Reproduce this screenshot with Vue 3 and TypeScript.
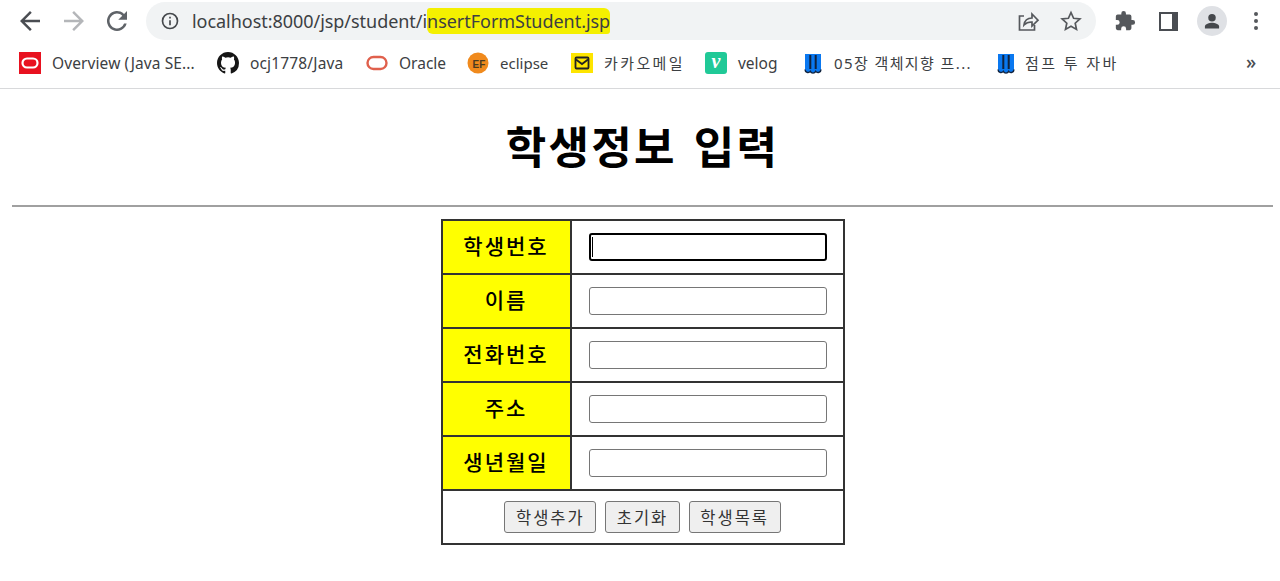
<script setup lang="ts">
const rows: string[] = ['학생번호', '이름', '전화번호', '주소', '생년월일']
</script>

<template>
  <div class="page">
    <header class="toolbar">
      <div class="nav">
        <svg class="ic back" viewBox="0 0 24 24"><path d="M20 11H7.800l5.600-5.600L12 4l-8 8 8 8 1.400-1.400L7.800 13H20z" /></svg>
        <svg class="ic fwd" viewBox="0 0 24 24"><path d="M4 11h12.200l-5.600-5.600L12 4l8 8-8 8-1.400-1.400 5.600-5.600H4z" /></svg>
        <svg class="ic reload" viewBox="0 0 24 24"><path d="M17.650 6.350A8 8 0 1 0 19.730 14h-2.080A6 6 0 1 1 12 6c1.660 0 3.140.69 4.220 1.780L13 11h7V4z" /></svg>
      </div>
      <div class="omnibox">
        <svg class="info" viewBox="0 0 24 24"><path d="M11 7h2v2h-2zm0 4h2v6h-2zm1-9a10 10 0 1 0 0 20 10 10 0 0 0 0-20zm0 18a8 8 0 1 1 0-16 8 8 0 0 1 0 16z" /></svg>
        <span class="url">localhost:8000/jsp/student/i<mark class="hl">nsertFormStudent.jsp</mark></span>
        <svg class="share" viewBox="0 0 24 24"><path class="line" d="M8 7H3.500v14h15v-5" /><path class="line" d="M8 16c.6-4.500 3.600-7 8-7V5l6 6.200-6 5.800v-4c-3.500-.2-6 1-8 3z" /></svg>
        <svg class="star" viewBox="0 0 24 24"><path class="line" d="M12 3.500l2.600 5.800 6.300.7-4.700 4.200 1.300 6.200L12 17.200l-5.500 3.200 1.300-6.200L3.100 10l6.300-.7z" /></svg>
      </div>
      <div class="actions">
        <svg class="puzzle" viewBox="0 0 24 24"><path d="M20.500 11H19V7a2 2 0 0 0-2-2h-4V3.500a2.500 2.500 0 0 0-5 0V5H4a2 2 0 0 0-2 2v3.800h1.500a2.700 2.700 0 0 1 0 5.400H2V20a2 2 0 0 0 2 2h3.800v-1.500a2.700 2.700 0 0 1 5.400 0V22H17a2 2 0 0 0 2-2v-4h1.500a2.500 2.500 0 0 0 0-5z" /></svg>
        <div class="panel"></div>
        <div class="avatar">
          <svg viewBox="0 0 24 24"><circle cx="12" cy="8" r="4.500" /><path d="M3.500 21v-2.500c0-3 5.500-4.500 8.500-4.500s8.500 1.500 8.500 4.500V21z" /></svg>
        </div>
        <div class="kebab"><i></i><i></i><i></i></div>
      </div>
    </header>

    <nav class="bookmarks">
      <a class="bm b1">
        <svg class="fav" viewBox="0 0 22 22"><rect width="22" height="22" fill="#e8111f" /><rect x="3.500" y="6.500" width="15" height="9" rx="4.500" fill="none" stroke="#fff" stroke-width="2.200" /></svg>
        <span>Overview (Java SE...</span>
      </a>
      <a class="bm b2">
        <svg class="fav" viewBox="0 0 16 16"><path fill="#161616" d="M8 0C3.580 0 0 3.580 0 8c0 3.540 2.290 6.530 5.470 7.590.4.070.55-.17.55-.38 0-.19-.01-.82-.01-1.490-2.010.37-2.530-.49-2.690-.94-.09-.23-.48-.94-.82-1.130-.28-.15-.68-.52-.01-.53.630-.01 1.080.58 1.230.82.720 1.210 1.870.870 2.330.66.070-.52.280-.87.510-1.070-1.780-.2-3.640-.89-3.640-3.950 0-.87.310-1.590.820-2.150-.08-.2-.36-1.020.08-2.120 0 0 .67-.21 2.200.82a7.420 7.420 0 0 1 4 0c1.530-1.040 2.200-.82 2.200-.82.440 1.100.16 1.920.08 2.120.51.560.82 1.270.82 2.150 0 3.070-1.870 3.750-3.650 3.950.29.250.54.730.54 1.480 0 1.070-.01 1.930-.01 2.200 0 .21.150.46.55.38A8.010 8.010 0 0 0 16 8c0-4.420-3.580-8-8-8z" /></svg>
        <span>ocj1778/Java</span>
      </a>
      <a class="bm b3">
        <svg class="fav" viewBox="0 0 22 22"><rect x="1.500" y="5" width="19" height="12" rx="6" fill="none" stroke="#e0604c" stroke-width="2.400" /></svg>
        <span>Oracle</span>
      </a>
      <a class="bm b4">
        <svg class="fav" viewBox="0 0 22 22"><circle cx="11" cy="11" r="10.500" fill="#f08a1d" /><text x="12" y="16" class="ef">EF</text></svg>
        <span>eclipse</span>
      </a>
      <a class="bm b5">
        <svg class="fav" viewBox="0 0 22 22"><rect width="22" height="20" y="1" fill="#fee500" /><rect x="4.500" y="5.500" width="13" height="11" rx="1" fill="none" stroke="#222" stroke-width="1.800" /><path d="M5 7.500l6 4.500 6-4.500" fill="none" stroke="#222" stroke-width="1.800" /></svg>
        <span>카카오메일</span>
      </a>
      <a class="bm b6">
        <div class="velog">v</div>
        <span>velog</span>
      </a>
      <a class="bm b7">
        <svg class="fav" viewBox="0 0 22 22"><path fill="#0a78f0" d="M3 2h16v15.500a3 3 0 0 1-5.300 1.900 3 3 0 0 1-5.400 0A3 3 0 0 1 3 17.500z" /><path d="M8.300 3v14M13.700 3v14" stroke="#10233f" stroke-width="2" /><path d="M3 17.500a3 3 0 0 0 5.300 1.900 3 3 0 0 0 5.400 0 3 3 0 0 0 5.300-1.900" fill="none" stroke="#10233f" stroke-width="1.400" /></svg>
        <span>05장 객체지향 프...</span>
      </a>
      <a class="bm b8">
        <svg class="fav" viewBox="0 0 22 22"><path fill="#0a78f0" d="M3 2h16v15.500a3 3 0 0 1-5.300 1.900 3 3 0 0 1-5.400 0A3 3 0 0 1 3 17.500z" /><path d="M8.300 3v14M13.700 3v14" stroke="#10233f" stroke-width="2" /><path d="M3 17.500a3 3 0 0 0 5.300 1.900 3 3 0 0 0 5.400 0 3 3 0 0 0 5.300-1.900" fill="none" stroke="#10233f" stroke-width="1.400" /></svg>
        <span>점프 투 자바</span>
      </a>
      <span class="more">»</span>
    </nav>

    <main class="content">
      <h1>학생정보 입력</h1>
      <hr />
      <table>
        <tbody>
          <tr v-for="(label, i) in rows" :key="label">
            <th>{{ label }}</th>
            <td><div class="input" :class="{ focus: i === 0 }"><b v-if="i === 0" class="caret"></b></div></td>
          </tr>
          <tr>
            <td colspan="2">
              <div class="btns">
                <button type="button">학생추가</button>
                <button type="button">초기화</button>
                <button type="button">학생목록</button>
              </div>
            </td>
          </tr>
        </tbody>
      </table>
    </main>
  </div>
</template>

<style scoped>
.page {
  width: 1280px;
  height: 581px;
  overflow: hidden;
  background: #fff;
  font-family: "Noto Sans", "Noto Sans CJK KR", sans-serif;
}
.toolbar {
  height: 44px;
  display: flex;
  align-items: flex-start;
}
.nav {
  display: flex;
  align-items: center;
  gap: 13.500px;
  height: 42px;
  padding-left: 15px;
  width: 146px;
  box-sizing: border-box;
}
.ic { width: 30px; height: 30px; flex: none; fill: #5f6368; }
.back { fill: #4a4d52; }
.fwd { fill: #b4b6b9; }
.omnibox {
  width: 950px;
  height: 38px;
  margin-top: 2px;
  background: #f1f3f4;
  border-radius: 19px;
  display: flex;
  align-items: center;
  box-sizing: border-box;
  padding-left: 14px;
}
.info { width: 20px; height: 20px; fill: #45484c; flex: none; }
.url {
  margin-left: 12px;
  font-size: 18px;
  color: #3c4043;
  white-space: nowrap;
  letter-spacing: -0.04px;
  flex: 1;
}
.hl {
  background: #f4f000;
  color: #3c4043;
  border-radius: 3px 6px 3px 6px;
  padding: 1px 0;
}
.line { fill: none; stroke: #55585c; stroke-width: 1.700; }
.share { width: 24px; height: 24px; flex: none; margin-right: 19px; }
.star { width: 24px; height: 24px; flex: none; margin-right: 13px; }
.actions {
  display: flex;
  align-items: center;
  height: 42px;
  padding-left: 18px;
}
.puzzle { width: 22px; height: 22px; fill: #55585c; flex: none; }
.panel {
  width: 19px;
  height: 19px;
  border: 2px solid #4a4d52;
  border-right-width: 6px;
  box-sizing: border-box;
  margin-left: 23px;
}
.avatar {
  width: 30px;
  height: 30px;
  border-radius: 50%;
  background: #dfe1e5;
  display: flex;
  align-items: center;
  justify-content: center;
  margin-left: 19px;
}
.avatar svg { width: 20px; height: 20px; fill: #45484c; }
.kebab { display: flex; flex-direction: column; gap: 3px; margin-left: 27px; }
.kebab i { width: 4px; height: 4px; border-radius: 50%; background: #55585c; }

.bookmarks {
  height: 45px;
  box-sizing: border-box;
  border-bottom: 1px solid #d8d9db;
  display: flex;
  align-items: center;
  position: relative;
  font-size: 15.500px;
  color: #3c4043;
  padding-left: 19px;
  padding-bottom: 7px;
}
.bm { display: flex; align-items: center; gap: 11px; white-space: nowrap; flex: none; }
.fav { width: 22px; height: 22px; flex: none; }
.ef { font-size: 10px; font-weight: 700; fill: #4a3a20; text-anchor: middle; font-family: "Liberation Sans", sans-serif; }
.b1 { width: 198px; }
.b1 span { letter-spacing: 0.1px; }
.b2 { width: 149px; }
.b2 span { letter-spacing: 0.15px; }
.b3 { width: 101px; }
.b4 { width: 104px; }
.b4 span { font-size: 15px; }
.b5 { width: 134px; }
.b5 span { font-size: 15px; letter-spacing: 2.400px; }
.b6 { width: 97px; }
.b7 { width: 193px; gap: 10px; }
.b7 span { font-size: 15px; letter-spacing: 1.400px; }
.b8 { gap: 8px; }
.b8 span { font-size: 15px; letter-spacing: 2.400px; }
.velog {
  width: 22px;
  height: 22px;
  border-radius: 3px;
  background: #20c997;
  color: #fff;
  font: italic 700 20px/19px "Liberation Serif", serif;
  text-align: center;
}
.more { position: absolute; left: 1246px; top: 5px; font-size: 19px; font-weight: 500; color: #4a4d52; }

.content { padding: 0 7px 0 12px; }
h1 {
  margin: 0;
  padding-top: 25px;
  height: 89px;
  box-sizing: border-box;
  text-align: center;
  font-size: 44px;
  line-height: 62px;
  letter-spacing: 2.200px;
  word-spacing: 5px;
  color: #000;
  font-weight: 700;
  font-family: "Noto Sans CJK KR", sans-serif;
}
hr {
  margin: 27px 0 12px;
  border: 0;
  height: 2px;
  background: #a0a0a0;
}
table {
  border-collapse: collapse;
  margin: 0 auto;
  width: 404px;
  border: 2px solid #333;
  table-layout: fixed;
}
th, td { border: 2px solid #333; padding: 0; height: 54px; box-sizing: border-box; }
th {
  width: 129px;
  padding-bottom: 4px;
  background: #ff0;
  color: #000;
  font-size: 21px;
  letter-spacing: 2px;
  font-weight: 500;
  font-family: "Noto Sans CJK KR", sans-serif;
}
.input {
  width: 238px;
  height: 28px;
  margin-left: 17px;
  box-sizing: border-box;
  border: 1px solid #767676;
  border-radius: 3px;
  background: #fff;
  display: flex;
  align-items: center;
}
.focus { border: 2px solid #000; padding-left: 1px; }
.caret { width: 1px; height: 20px; background: #000; }
.btns { display: flex; justify-content: center; gap: 9px; }
button {
  height: 32px;
  padding: 0 10.500px;
  border: 1px solid #767676;
  border-radius: 3px;
  background: #efefef;
  color: #333;
  font-size: 16.500px;
  letter-spacing: 2px;
  font-family: "Noto Sans CJK KR", sans-serif;
}
</style>
